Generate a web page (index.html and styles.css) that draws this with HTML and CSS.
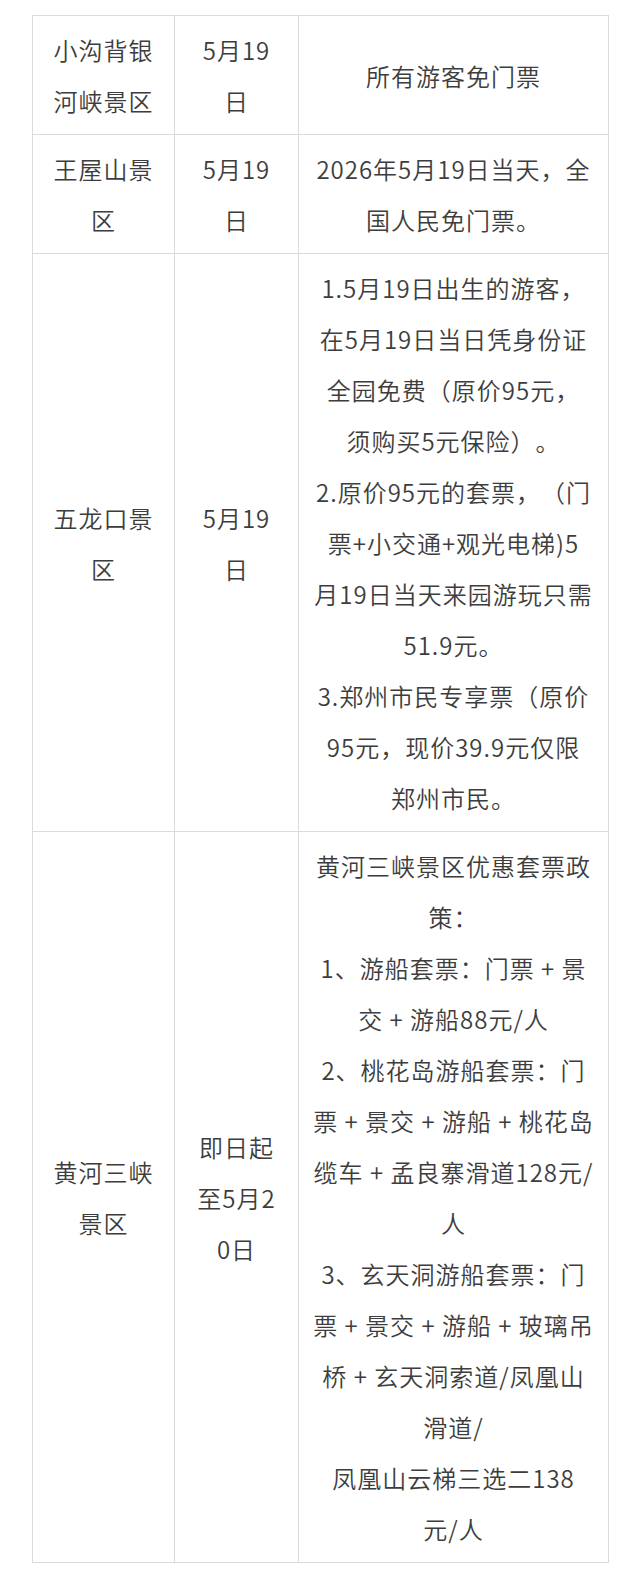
FILE: index.html
```html
<!DOCTYPE html>
<html lang="zh-CN">
<head>
<meta charset="utf-8">
<title>景区优惠</title>
<link rel="stylesheet" href="styles.css">
</head>
<body>
<table class="tbl">
  <colgroup>
    <col class="c1">
    <col class="c2">
    <col class="c3">
  </colgroup>
  <tr>
    <td>小沟背银河峡景区</td>
    <td>5月19日</td>
    <td class="desc"><span class="ln">所有游客免门票</span></td>
  </tr>
  <tr>
    <td>王屋山景区</td>
    <td>5月19日</td>
    <td class="desc"><span class="ln">2026年5月19日当天，全</span><span class="ln">国人民免门票。</span></td>
  </tr>
  <tr>
    <td>五龙口景区</td>
    <td>5月19日</td>
    <td class="desc">
      <span class="ln">1.5月19日出生的游客，</span>
      <span class="ln">在5月19日当日凭身份证</span>
      <span class="ln">全园免费（原价95元，</span>
      <span class="ln">须购买5元保险）。</span>
      <span class="ln">2.原价95元的套票，（门</span>
      <span class="ln">票+小交通+观光电梯)5</span>
      <span class="ln">月19日当天来园游玩只需</span>
      <span class="ln">51.9元。</span>
      <span class="ln">3.郑州市民专享票（原价</span>
      <span class="ln">95元，现价39.9元仅限</span>
      <span class="ln">郑州市民。</span>
    </td>
  </tr>
  <tr>
    <td>黄河三峡景区</td>
    <td>即日起至5月20日</td>
    <td class="desc">
      <span class="ln">黄河三峡景区优惠套票政</span>
      <span class="ln">策：</span>
      <span class="ln">1、游船套票：门票 + 景</span>
      <span class="ln">交 + 游船88元/人</span>
      <span class="ln">2、桃花岛游船套票：门</span>
      <span class="ln">票 + 景交 + 游船 + 桃花岛</span>
      <span class="ln">缆车 + 孟良寨滑道128元/</span>
      <span class="ln">人</span>
      <span class="ln">3、玄天洞游船套票：门</span>
      <span class="ln">票 + 景交 + 游船 + 玻璃吊</span>
      <span class="ln">桥 + 玄天洞索道/凤凰山</span>
      <span class="ln">滑道/</span>
      <span class="ln">凤凰山云梯三选二138</span>
      <span class="ln">元/人</span>
    </td>
  </tr>
</table>
</body>
</html>
```

FILE: styles.css
```css
html, body {
  margin: 0;
  padding: 0;
  background: #ffffff;
}
body {
  padding: 15px 0 0 32px;
  font-family: "Noto Sans CJK SC", "Noto Sans", sans-serif;
  color: #3d3d3d;
}
.tbl {
  border-collapse: collapse;
  table-layout: fixed;
  width: 576px;
}
.c1 { width: 142px; }
.c2 { width: 124px; }
.c3 { width: 310px; }
.tbl td {
  border: 1.5px solid #dadada;
  padding: 8px 20px;
  text-align: center;
  vertical-align: middle;
  font-size: 24px;
  font-weight: 350;
  line-height: 51px;
  letter-spacing: 1px;
  word-break: break-all;
  text-spacing-trim: space-all;
}
.tbl td.desc {
  padding: 8px 6px;
}
.ln {
  display: block;
  white-space: nowrap;
}
```
